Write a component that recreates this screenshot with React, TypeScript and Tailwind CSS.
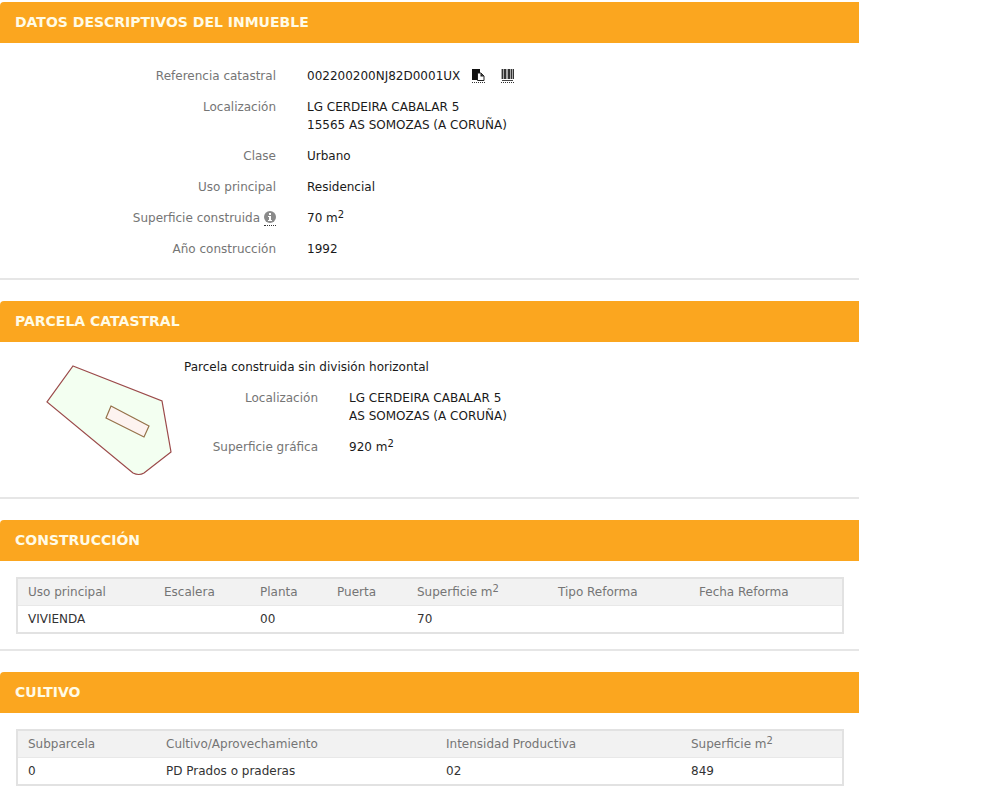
import React from "react";

type PanelProps = {
  title: string;
  children: React.ReactNode;
};

function Panel({ title, children }: PanelProps) {
  return (
    <section className="mb-[21px] rounded-t border-b-2 border-[#e6e6e6]">
      <h2 className="rounded-tl bg-[#fba61f] px-[15px] py-[11px] font-['DejaVu_Sans',Verdana,sans-serif] text-[14px] leading-[19px] font-bold text-[#fffbe6]">
        {title}
      </h2>
      {children}
    </section>
  );
}

function SquareMeters() {
  return (
    <>
      m<sup className="top-[-4px] text-[10px]">2</sup>
    </>
  );
}

type RowProps = {
  label: React.ReactNode;
  children: React.ReactNode;
};

function Row({ label, children }: RowProps) {
  return (
    <>
      <dt className="text-right text-[#757575]">{label}</dt>
      <dd>{children}</dd>
    </>
  );
}

type DataTableProps = {
  label: string;
  widths: string[];
  headers: React.ReactNode[];
  values: string[];
};

function DataTable({ label, widths, headers, values }: DataTableProps) {
  return (
    <div className="pt-4 pr-[15px] pb-[15px] pl-4">
      <table
        aria-label={label}
        className="w-full table-fixed border-collapse border-2 border-[#e2e2e2] text-left"
      >
        <colgroup>
          {widths.map((width, i) => (
            <col key={i} className={width} />
          ))}
        </colgroup>
        <thead className="bg-[#f2f2f2] text-[#757575]">
          <tr className="border-b border-[#e8e8e8]">
            {headers.map((header, i) => (
              <th key={i} className="px-[10px] py-1 font-normal">
                {header}
              </th>
            ))}
          </tr>
        </thead>
        <tbody className="text-[#333333]">
          <tr>
            {values.map((value, i) => (
              <td key={i} className="px-[10px] py-1">
                {value}
              </td>
            ))}
          </tr>
        </tbody>
      </table>
    </div>
  );
}

function CopyIcon() {
  return (
    <svg width="13" height="13" viewBox="0 0 13 13" aria-hidden="true">
      <path d="M0 0h8v4H5v7H0z" fill="#111" />
      <path d="M5.500 4h3.500l3 3v4.500h-6.500z" fill="#fff" stroke="#222" />
      <path d="M8.500 4v3.500h3.500z" fill="#222" />
    </svg>
  );
}

function BarcodeIcon() {
  return (
    <svg width="13" height="13" viewBox="0 0 13 13" aria-hidden="true">
      <path d="M0 0h13v10H0z" fill="#aaa" />
      <path d="M1 0h1v10H1zM3 0h2v10H3zM7 0h2v10H7zM10 0h1v10h-1zM12 0h1v10h-1z" fill="#333" />
      <path d="M1 11.500h11" stroke="#444" />
    </svg>
  );
}

function InfoIcon() {
  return (
    <svg width="12" height="12" viewBox="0 0 12 12" aria-hidden="true">
      <circle cx="6" cy="6" r="6" fill="#8a8a8a" />
      <path d="M5 2h2v2H5zM4 5h3v4h1v1H4V9h1V6H4z" fill="#fff" />
    </svg>
  );
}

function ParcelMap() {
  return (
    <svg
      width="126"
      height="112"
      viewBox="0 0 126 112"
      role="img"
      aria-label="Parcela"
      className="shrink-0"
    >
      <path
        d="M27 1L116 36L125 87L98 108Q93 111 87 108L1 37Z"
        fill="#f3fff1"
        stroke="#9b4a4a"
        strokeWidth="1.2"
      />
      <path
        d="M65 41L103 61L98 72L60 53Z"
        fill="#fdf3f0"
        stroke="#95724a"
        strokeWidth="1.2"
      />
    </svg>
  );
}

function App() {
  return (
    <main className="bg-white pt-[2px] pr-36 font-['DejaVu_Sans',Verdana,sans-serif] text-[12px] leading-[18px] text-[#1a1a1a]">
      <Panel title="DATOS DESCRIPTIVOS DEL INMUEBLE">
        <dl className="grid grid-cols-[276px_1fr] gap-x-[31px] gap-y-[13px] pt-6 pb-5">
          <Row label="Referencia catastral">
            <div className="flex items-center">
              002200200NJ82D0001UX
              <button
                type="button"
                aria-label="Copiar referencia catastral"
                className="ml-3 border-b border-dotted border-[#333333]"
              >
                <CopyIcon />
              </button>
              <button
                type="button"
                aria-label="Código de barras"
                className="ml-4 border-b border-dotted border-[#333333]"
              >
                <BarcodeIcon />
              </button>
            </div>
          </Row>
          <Row label="Localización">
            LG CERDEIRA CABALAR 5<br />
            15565 AS SOMOZAS (A CORUÑA)
          </Row>
          <Row label="Clase">Urbano</Row>
          <Row label="Uso principal">Residencial</Row>
          <Row
            label={
              <span className="flex items-center justify-end gap-1">
                Superficie construida
                <span className="border-b border-dotted border-[#333333] pb-[2px]">
                  <InfoIcon />
                </span>
              </span>
            }
          >
            70 <SquareMeters />
          </Row>
          <Row label="Año construcción">1992</Row>
        </dl>
      </Panel>

      <Panel title="PARCELA CATASTRAL">
        <div className="flex gap-3 pt-4 pb-5 pl-[46px]">
          <div className="pt-[7px]">
            <ParcelMap />
          </div>
          <div className="flex-1">
            <p>Parcela construida sin división horizontal</p>
            <dl className="mt-[13px] grid grid-cols-[134px_1fr] gap-x-[31px] gap-y-[13px]">
              <Row label="Localización">
                LG CERDEIRA CABALAR 5<br />
                AS SOMOZAS (A CORUÑA)
              </Row>
              <Row label="Superficie gráfica">
                920 <SquareMeters />
              </Row>
            </dl>
          </div>
        </div>
      </Panel>

      <Panel title="CONSTRUCCIÓN">
        <DataTable
          label="Construcción"
          widths={["w-[137px]", "w-24", "w-[77px]", "w-20", "w-[141px]", "w-[141px]", "w-auto"]}
          headers={[
            "Uso principal",
            "Escalera",
            "Planta",
            "Puerta",
            <>Superficie <SquareMeters /></>,
            "Tipo Reforma",
            "Fecha Reforma",
          ]}
          values={["VIVIENDA", "", "00", "", "70", "", ""]}
        />
      </Panel>

      <Panel title="CULTIVO">
        <DataTable
          label="Cultivo"
          widths={["w-[139px]", "w-[280px]", "w-[245px]", "w-auto"]}
          headers={[
            "Subparcela",
            "Cultivo/Aprovechamiento",
            "Intensidad Productiva",
            <>Superficie <SquareMeters /></>,
          ]}
          values={["0", "PD Prados o praderas", "02", "849"]}
        />
      </Panel>
    </main>
  );
}

export default App;
